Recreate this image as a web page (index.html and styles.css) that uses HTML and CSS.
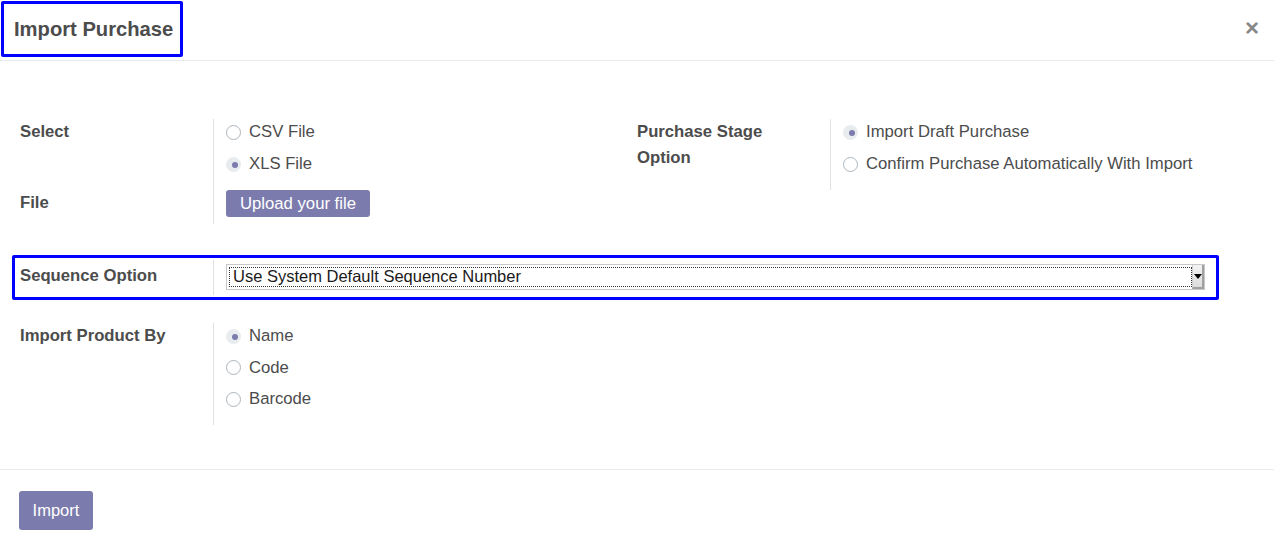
FILE: index.html
```html
<!DOCTYPE html>
<html>
<head>
<meta charset="utf-8">
<link rel="stylesheet" href="styles.css">
</head>
<body>
<div class="modal">
  <header class="modal-header">
    <h4 class="title-box">Import Purchase</h4>
    <span class="close">&times;</span>
  </header>
  <main class="modal-body">
    <div class="group-row">
      <div class="group">
        <div class="lbl-col">
          <div class="lbl">Select</div>
          <div class="lbl file-lbl">File</div>
        </div>
        <div class="val-col">
          <label class="radio"><span class="dot"></span>CSV File</label>
          <label class="radio"><span class="dot on"></span>XLS File</label>
          <div class="upload">Upload your file</div>
        </div>
      </div>
      <div class="group">
        <div class="lbl-col">
          <div class="lbl lbl-wrap">Purchase Stage<br>Option</div>
        </div>
        <div class="val-col short">
          <label class="radio"><span class="dot on"></span>Import Draft Purchase</label>
          <label class="radio"><span class="dot"></span>Confirm Purchase Automatically With Import</label>
        </div>
      </div>
    </div>

    <div class="seq-box">
      <div class="lbl-col seq-lbl">
        <div class="lbl">Sequence Option</div>
      </div>
      <div class="val-col seq-val">
        <div class="select">
          <span class="select-value">Use System Default Sequence Number</span>
          <span class="select-btn"><span class="arrow"></span></span>
        </div>
      </div>
    </div>

    <div class="group-row prod-row">
      <div class="group">
        <div class="lbl-col">
          <div class="lbl">Import Product By</div>
        </div>
        <div class="val-col">
          <label class="radio"><span class="dot on"></span>Name</label>
          <label class="radio"><span class="dot"></span>Code</label>
          <label class="radio"><span class="dot"></span>Barcode</label>
        </div>
      </div>
    </div>
  </main>
  <footer class="modal-footer">
    <button class="btn-import">Import</button>
  </footer>
</div>
</body>
</html>
```

FILE: styles.css
```css
html, body {
  margin: 0;
  padding: 0;
  background: #ffffff;
}
body {
  font-family: "Liberation Sans", Arial, sans-serif;
  font-size: 16.7px;
  color: #4c4c4c;
}
.modal {
  width: 1274px;
  height: 558px;
}
.modal-header {
  height: 60px;
  border-bottom: 1px solid #e9ecef;
  display: flex;
  align-items: flex-start;
  justify-content: space-between;
  box-sizing: content-box;
}
.title-box {
  margin: 1px 0 0 1px;
  width: 182px;
  height: 56px;
  box-sizing: border-box;
  border: 3px solid #0000ff;
  border-radius: 2px;
  font-size: 20.2px;
  font-weight: bold;
  color: #4c4c4c;
  padding: 14px 0 0 10px;
  line-height: 23px;
}
.close {
  font-size: 24px;
  font-weight: bold;
  color: #888888;
  margin: 15px 15px 0 0;
  line-height: 26px;
}
.modal-body {
  padding: 58px 20px 0 20px;
  height: 350px;
  box-sizing: content-box;
}
.group-row {
  display: flex;
}
.group {
  display: flex;
  width: 617px;
}
.lbl-col {
  width: 194px;
  flex: none;
  border-right: 1px solid #dee2e6;
  box-sizing: border-box;
  display: flex;
  flex-direction: column;
}
.lbl {
  font-weight: bold;
  line-height: 26px;
}
.file-lbl {
  margin-top: 45px;
}
.val-col {
  padding-left: 12px;
  height: 105px;
  display: flex;
  flex-direction: column;
}
.val-col.short {
  height: auto;
}
.group:nth-child(2) .lbl-col {
  height: 71px;
}
.radio {
  display: flex;
  align-items: center;
  height: 32px;
  line-height: 32px;
  margin-top: -3px;
  margin-bottom: 3px;
}
.val-col .radio:first-child {
  margin-top: 0;
  height: 26px;
  margin-bottom: 6px;
}
.dot {
  width: 15px;
  height: 15px;
  border: 1px solid #adb5bd;
  border-radius: 50%;
  box-sizing: border-box;
  margin-right: 8px;
  position: relative;
  flex: none;
}
.dot.on {
  background: #e9ecef;
  border-color: #e9ecef;
}
.dot.on::after {
  content: "";
  position: absolute;
  left: 4.5px;
  top: 4.5px;
  width: 6px;
  height: 6px;
  border-radius: 50%;
  background: #7c7bad;
}
.upload {
  align-self: flex-start;
  background: #7c7bad;
  color: #ffffff;
  border-radius: 3px;
  height: 27px;
  line-height: 27px;
  padding: 0 14px;
  margin-top: 7px;
}
.seq-box {
  margin: 31px 0 0 -8px;
  width: 1207px;
  height: 45px;
  border: 3px solid #0000ff;
  border-radius: 2px;
  box-sizing: border-box;
  display: flex;
  align-items: center;
  padding-left: 5px;
}
.seq-lbl {
  height: 35px;
  justify-content: center;
}
.seq-lbl .lbl {
  margin-top: -3px;
}
.seq-val {
  height: auto;
  padding-left: 12px;
  flex: 1;
}
.select {
  width: 979px;
  height: 26px;
  border: 1px solid #c8c8c8;
  box-sizing: border-box;
  display: flex;
  background: #ffffff;
  margin-top: -1px;
}
.select-value {
  flex: 1;
  margin: 2px 0 2px 2px;
  border: 1px dotted #333;
  color: #1a1a1a;
  font-size: 16.5px;
  line-height: 17px;
  padding-left: 3px;
}
.select-btn {
  width: 12px;
  background: linear-gradient(#f3f3f3, #dcdcdc);
  border-left: 1px solid #d0d0d0;
  border-right: 2px solid #a0a0a0;
  border-bottom: 2px solid #a0a0a0;
  display: flex;
  align-items: center;
  justify-content: center;
  box-sizing: border-box;
}
.arrow {
  width: 0;
  height: 0;
  border-left: 4px solid transparent;
  border-right: 4px solid transparent;
  border-top: 5px solid #000;
}
.prod-row {
  margin-top: 23px;
}
.prod-row .val-col {
  height: 102px;
}
.prod-row .radio {
  margin-top: -3.5px;
}
.prod-row .val-col .radio:first-child {
  margin-top: 0;
}
.modal-footer {
  border-top: 1px solid #e9ecef;
  padding: 21px 19px;
}
.btn-import {
  font-family: "Liberation Sans", Arial, sans-serif;
  font-size: 16.5px;
  background: #7c7bad;
  color: #ffffff;
  border: none;
  border-radius: 3px;
  height: 39px;
  width: 74px;
  padding: 0;
}
```
